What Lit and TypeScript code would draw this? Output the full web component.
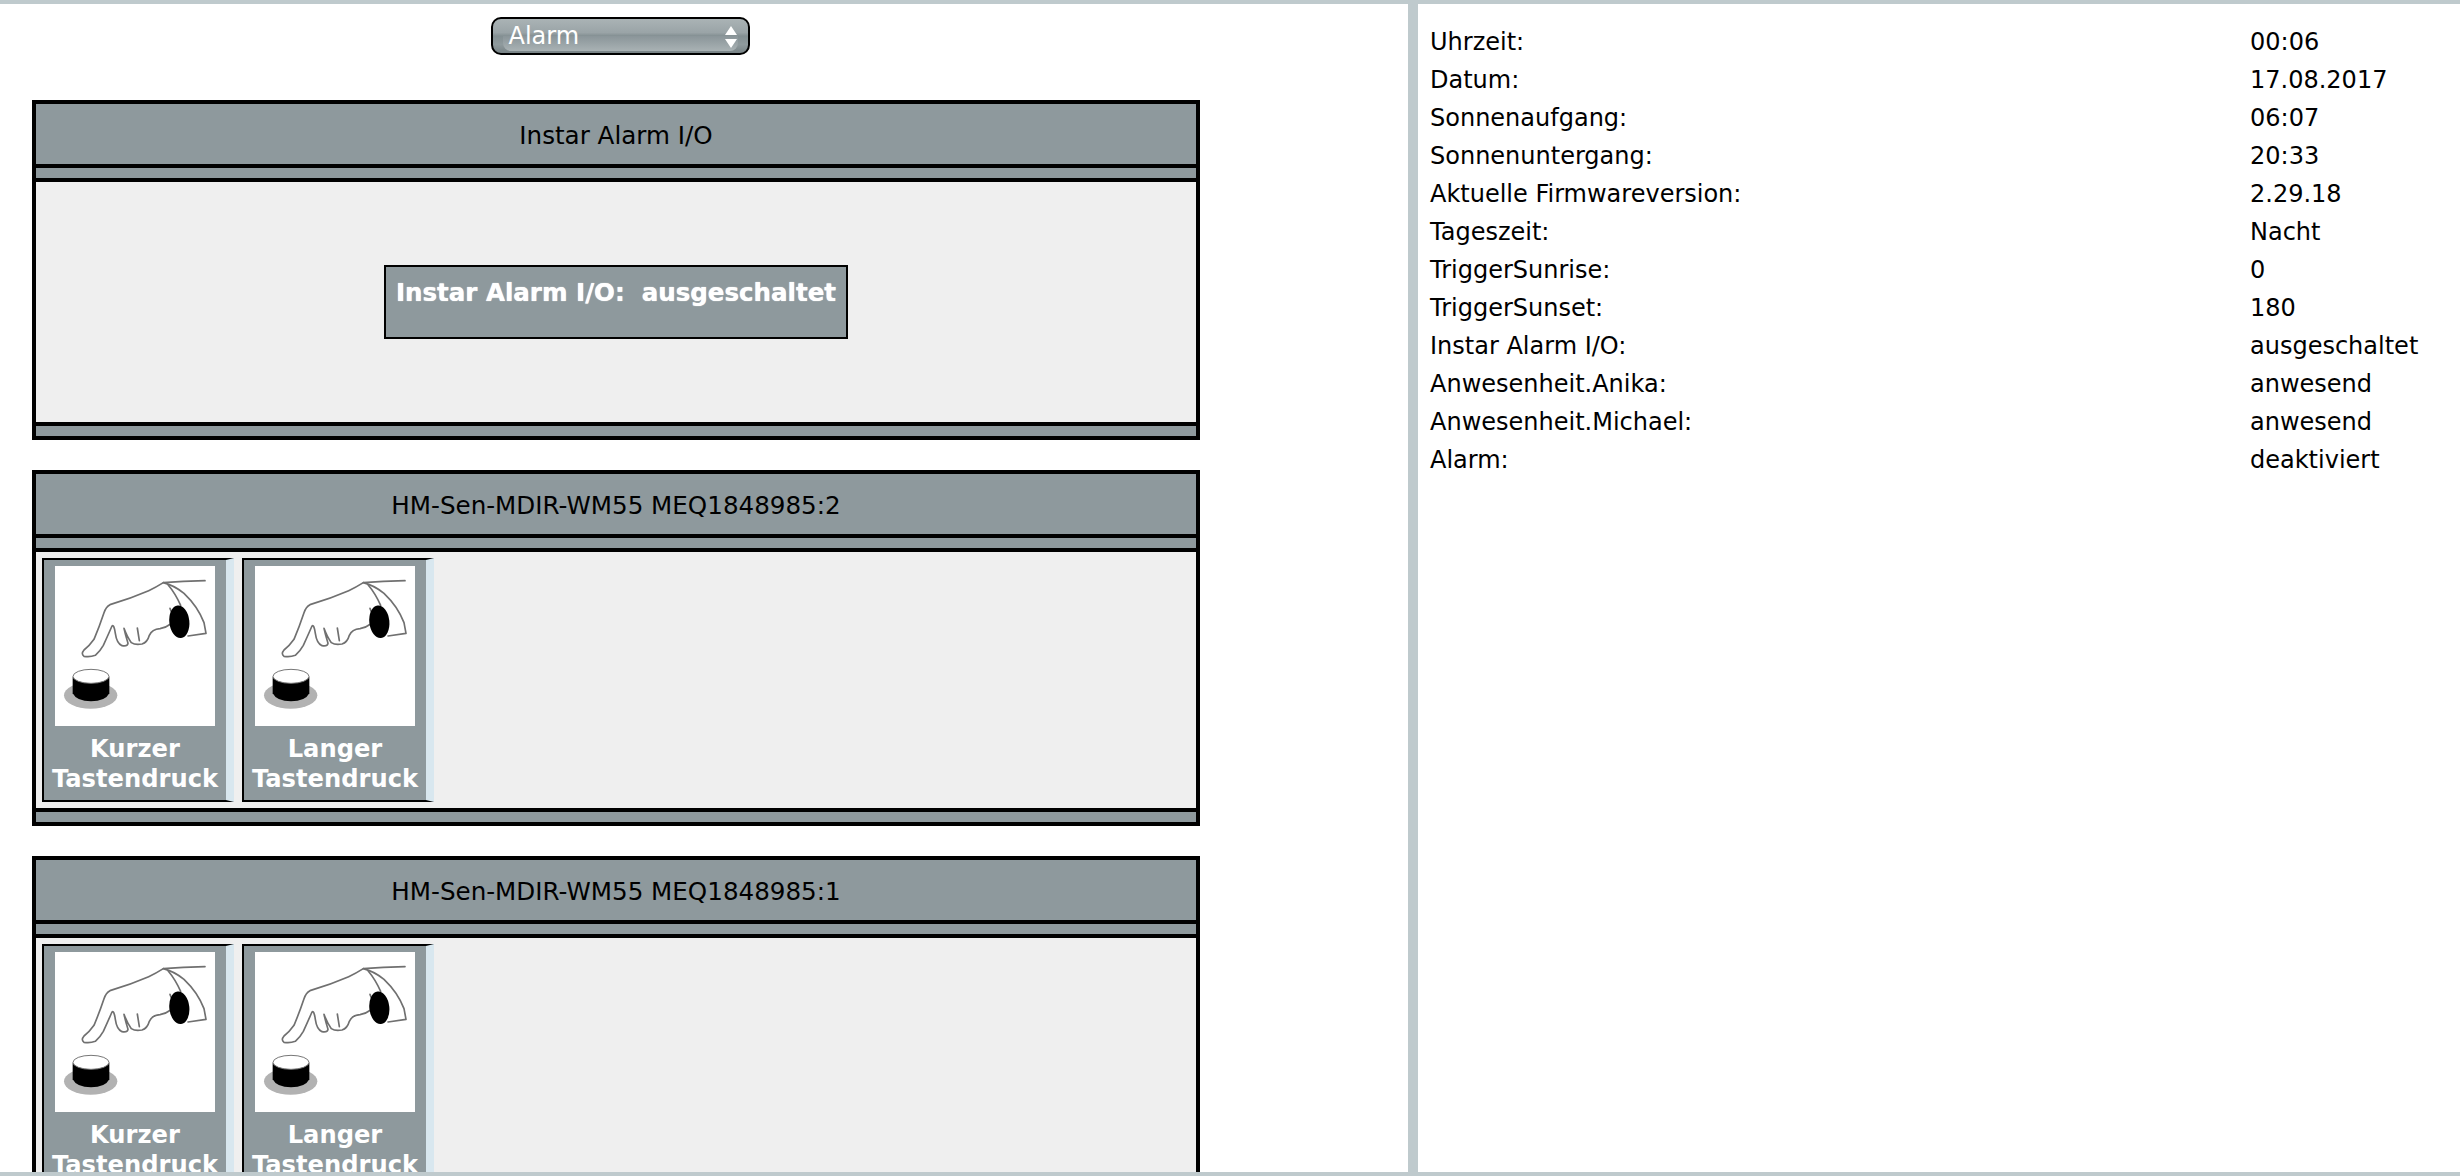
import { LitElement, html, css } from "lit";
import { customElement } from "lit/decorators.js";

const rows: [string, string][] = [
  ["Uhrzeit:", "00:06"],
  ["Datum:", "17.08.2017"],
  ["Sonnenaufgang:", "06:07"],
  ["Sonnenuntergang:", "20:33"],
  ["Aktuelle Firmwareversion:", "2.29.18"],
  ["Tageszeit:", "Nacht"],
  ["TriggerSunrise:", "0"],
  ["TriggerSunset:", "180"],
  ["Instar Alarm I/O:", "ausgeschaltet"],
  ["Anwesenheit.Anika:", "anwesend"],
  ["Anwesenheit.Michael:", "anwesend"],
  ["Alarm:", "deaktiviert"],
];

const hand = html`<svg class="pic" viewBox="15 18 480 480" aria-hidden="true">
  <rect x="15" y="18" width="480" height="480" fill="#fff" />
  <g fill="none" stroke="#707070" stroke-width="5" stroke-linecap="round" stroke-linejoin="round">
    <path d="M465 62 L400 64 L340 68 Q318 82 296 92 Q240 116 180 134 Q168 140 162 158 Q148 200 132 238 Q118 258 102 270 Q92 282 102 289 Q120 292 136 286 Q150 274 160 256 Q172 230 186 198 Q192 192 196 220 Q200 250 216 257 Q232 260 234 250 Q226 224 222 205 Q232 232 244 248 Q256 256 276 252 Q292 248 298 226 Q306 208 330 206 Q346 204 362 192" />
    <path d="M340 68 Q372 76 402 100 Q444 140 462 188 L468 220 L414 228" />
    <path d="M354 74 Q376 100 392 136" />
    <path d="M262 204 L268 242" />
    <path d="M360 145 L366 160" />
  </g>
  <ellipse cx="388" cy="185" rx="30" ry="49" transform="rotate(-6 388 185)" fill="#000" />
  <ellipse cx="122" cy="406" rx="80" ry="40" fill="#b2b2b2" />
  <path d="M68 350 L68 400 Q80 424 123 424 Q166 424 178 400 L178 350 Z" fill="#000" />
  <ellipse cx="123" cy="349" rx="54" ry="21" fill="#fff" stroke="#777" stroke-width="3" />
</svg>`;

const tile = (a: string) => html`<div class="tile">${hand}<div class="cap">${a}<br />Tastendruck</div></div>`;

const panel = (title: string, body: unknown, cls = "") => html`<section class="panel">
  <div class="head">${title}</div>
  <div class="strip"></div>
  <div class="body ${cls}">${body}</div>
  <div class="strip foot"></div>
</section>`;

@customElement("app-root")
export class AppRoot extends LitElement {
  static styles = css`
    :host {
      display: block;
      height: 100vh;
      font-family: "DejaVu Sans", Verdana, sans-serif;
      font-size: 24px;
      color: #000;
      background: #fff;
    }
    .page {
      box-sizing: border-box;
      height: 100%;
      display: flex;
      border-top: 4px solid #bfcacd;
      border-bottom: 4px solid #bfcacd;
      overflow: hidden;
    }
    .left {
      width: 1408px;
      flex: none;
      height: 100%;
      overflow: hidden;
    }
    .right {
      flex: 1;
      border-left: 10px solid #bfcacd;
      padding: 19px 0 0 12px;
      display: grid;
      grid-template-columns: 820px 1fr;
      grid-auto-rows: 38px;
      align-content: start;
      align-items: center;
    }
    .selwrap {
      width: 1240px;
      display: flex;
      justify-content: center;
      padding-top: 13px;
    }
    .select {
      box-sizing: border-box;
      width: 259px;
      height: 38px;
      border: 2px solid #000;
      border-radius: 10px;
      position: relative;
      overflow: hidden;
      padding-left: 16px;
      display: flex;
      align-items: center;
      color: #fff;
      font-size: 24px;
      background: linear-gradient(#aab3b5 0%, #9aa4a7 40%, #838f92 50%, #8f9a9d 75%, #788386 100%);
    }
    .select::before {
      content: "";
      position: absolute;
      left: 10px;
      right: 10px;
      top: 17px;
      bottom: 2px;
      border-radius: 0 0 8px 8px;
      background: linear-gradient(#8a9599, #a9b2b4);
    }
    .select span {
      position: relative;
    }
    .arrows {
      position: absolute;
      right: 9px;
      top: 6px;
      width: 16px;
      height: 24px;
    }
    .panel {
      box-sizing: border-box;
      margin: 0 0 30px 32px;
      width: 1168px;
      border: 4px solid #000;
      background: #8e999d;
    }
    .selwrap + .panel {
      margin-top: 45px;
    }
    .head {
      height: 60px;
      padding-top: 2px;
      box-sizing: border-box;
      font-size: 24.6px;
      display: flex;
      align-items: center;
      justify-content: center;
    }
    .strip {
      height: 10px;
      border-top: 4px solid #000;
      border-bottom: 4px solid #000;
    }
    .strip.foot {
      border-bottom: 0;
    }
    .body {
      background: #efefef;
      padding: 6px;
      display: flex;
      gap: 8px;
    }
    .body.center {
      height: 240px;
      box-sizing: border-box;
      padding: 0;
      align-items: center;
      justify-content: center;
    }
    .state {
      box-sizing: border-box;
      width: 464px;
      height: 74px;
      border: 2px solid #000;
      background: #8e999d;
      color: #fff;
      font-weight: bold;
      font-size: 24.5px;
      text-align: center;
      line-height: 30px;
      padding-top: 11px;
      white-space: pre;
      text-shadow: 0 0 1px #fff;
    }
    .tile {
      box-sizing: border-box;
      width: 192px;
      height: 244px;
      border-style: solid;
      border-width: 2px 8px 2px 2px;
      border-color: #000 #d8e7ef #000 #000;
      background: #8e999d;
      padding-top: 6px;
      text-align: center;
      color: #fff;
    }
    .pic {
      display: block;
      width: 160px;
      height: 160px;
      margin: 0 auto;
    }
    .cap {
      margin-top: 8px;
      font-weight: bold;
      font-size: 24.2px;
      line-height: 30px;
      white-space: nowrap;
    }
  `;

  render() {
    const tiles = html`${tile("Kurzer")}${tile("Langer")}`;
    return html`<div class="page">
      <div class="left">
        <div class="selwrap">
          <div class="select">
            <span>Alarm</span>
            <svg class="arrows" viewBox="0 0 16 24" aria-hidden="true">
              <path d="M8 1 L14 10 H2 Z M2 14 H14 L8 23 Z" fill="#fff" />
            </svg>
          </div>
        </div>
        ${panel("Instar Alarm I/O", html`<div class="state">Instar Alarm I/O:  ausgeschaltet</div>`, "center")}
        ${panel("HM-Sen-MDIR-WM55 MEQ1848985:2", tiles)}
        ${panel("HM-Sen-MDIR-WM55 MEQ1848985:1", tiles)}
      </div>
      <div class="right">
        ${rows.map(([k, v]) => html`<div>${k}</div><div>${v}</div>`)}
      </div>
    </div>`;
  }
}
